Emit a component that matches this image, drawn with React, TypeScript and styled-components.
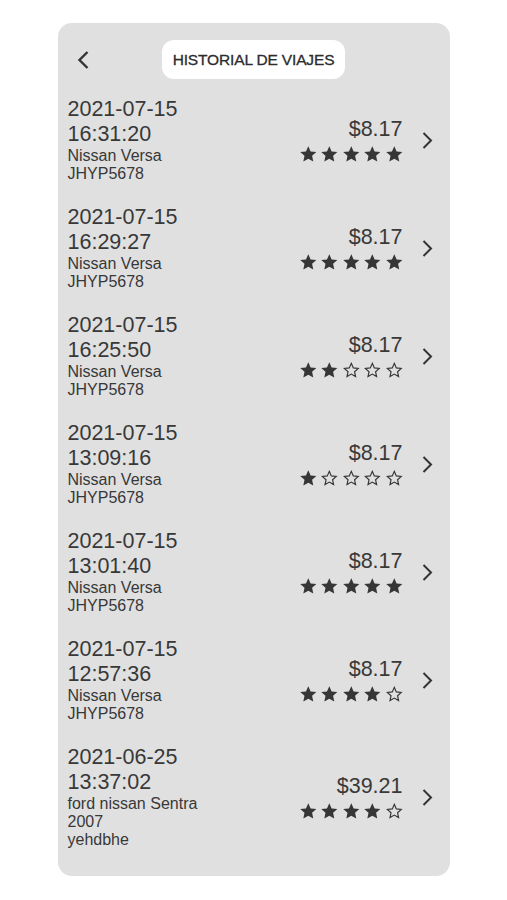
import React from "react";
import styled, { createGlobalStyle } from "styled-components";

const GlobalStyle = createGlobalStyle`
    body {
        margin: 0;
        background: #ffffff;
        font-family: "Liberation Sans", Arial, sans-serif;
        color: #383838;
    }
`;

const Page = styled.div`
    width: 507px;
    padding-top: 23px;
    display: flex;
    justify-content: center;
`;

const Card = styled.div`
    width: 392px;
    box-sizing: border-box;
    background: #e0e0e0;
    border-radius: 14px;
    padding: 17px 17px 27px 10px;
    display: flex;
    flex-direction: column;
`;

const HeaderRow = styled.div`
    position: relative;
    height: 39px;
    display: flex;
    align-items: center;
    justify-content: center;
    margin-bottom: 18px;
    margin-right: -7px;
`;

const BackButton = styled.div`
    position: absolute;
    left: 8px;
    top: 11px;
    width: 14px;
    height: 18px;
    display: flex;
`;

const TitlePill = styled.div`
    width: 183px;
    height: 39px;
    background: #ffffff;
    border-radius: 12px;
    display: flex;
    align-items: center;
    justify-content: center;
    font-size: 15.5px;
    letter-spacing: -0.15px;
    color: #2c2c2c;
    -webkit-text-stroke: 0.3px #2c2c2c;
`;

const TripList = styled.div`
    display: flex;
    flex-direction: column;
    gap: 22px;
`;

const TripRow = styled.div`
    display: flex;
    align-items: center;
`;

const TripInfo = styled.div`
    width: 150px;
    display: flex;
    flex-direction: column;
`;

const BigLine = styled.div`
    font-size: 21.5px;
    line-height: 25px;
`;

const SmallLine = styled.div`
    font-size: 16px;
    line-height: 18px;
`;

const TripSummary = styled.div`
    margin-left: auto;
    display: flex;
    flex-direction: column;
    align-items: flex-end;
`;

const Price = styled.div`
    font-size: 21.5px;
    line-height: 25px;
`;

const Stars = styled.div`
    display: flex;
    gap: 5px;
    margin-top: 4px;
    margin-bottom: 1px;
`;

const Chevron = styled.div`
    margin-left: 19px;
    width: 11px;
    height: 17px;
    display: flex;
`;

const STAR =
    "M0,-10 L2.763,-3.802 L9.511,-3.09 L4.47,1.452 L5.878,8.09 L0,4.7 L-5.878,8.09 L-4.47,1.452 L-9.511,-3.09 L-2.763,-3.802 Z";

const Star = ({ filled }: { filled: boolean }) => (
    <svg width="16.6" height="15.6" viewBox="-9.7 -10.2 19.4 18.4" style={{ overflow: "visible" }}>
        {filled ? (
            <path d={STAR} fill="#363636" />
        ) : (
            <path
                d={STAR}
                fill="none"
                stroke="#363636"
                strokeWidth="1.6"
                transform="scale(0.86)"
            />
        )}
    </svg>
);

type Trip = {
    date: string;
    time: string;
    lines: string[];
    price: string;
    rating: number;
};

const trips: Trip[] = [
    { date: "2021-07-15", time: "16:31:20", lines: ["Nissan Versa", "JHYP5678"], price: "$8.17", rating: 5 },
    { date: "2021-07-15", time: "16:29:27", lines: ["Nissan Versa", "JHYP5678"], price: "$8.17", rating: 5 },
    { date: "2021-07-15", time: "16:25:50", lines: ["Nissan Versa", "JHYP5678"], price: "$8.17", rating: 2 },
    { date: "2021-07-15", time: "13:09:16", lines: ["Nissan Versa", "JHYP5678"], price: "$8.17", rating: 1 },
    { date: "2021-07-15", time: "13:01:40", lines: ["Nissan Versa", "JHYP5678"], price: "$8.17", rating: 5 },
    { date: "2021-07-15", time: "12:57:36", lines: ["Nissan Versa", "JHYP5678"], price: "$8.17", rating: 4 },
    { date: "2021-06-25", time: "13:37:02", lines: ["ford nissan Sentra 2007", "yehdbhe"], price: "$39.21", rating: 4 },
];

const App = () => {
    return (
        <>
            <GlobalStyle />
            <Page>
                <Card>
                    <HeaderRow>
                        <BackButton>
                            <svg width="14" height="18" viewBox="0 0 14 18">
                                <path d="M11.5 1 L3.5 9 L11.5 17" fill="none" stroke="#333" strokeWidth="2.4" />
                            </svg>
                        </BackButton>
                        <TitlePill>HISTORIAL DE VIAJES</TitlePill>
                    </HeaderRow>
                    <TripList>
                        {trips.map((trip, i) => (
                            <TripRow key={i}>
                                <TripInfo>
                                    <BigLine>{trip.date}</BigLine>
                                    <BigLine>{trip.time}</BigLine>
                                    {trip.lines.map((line, j) => (
                                        <SmallLine key={j}>{line}</SmallLine>
                                    ))}
                                </TripInfo>
                                <TripSummary>
                                    <Price>{trip.price}</Price>
                                    <Stars>
                                        {[0, 1, 2, 3, 4].map((s) => (
                                            <Star key={s} filled={s < trip.rating} />
                                        ))}
                                    </Stars>
                                </TripSummary>
                                <Chevron>
                                    <svg width="11" height="17" viewBox="0 0 11 17">
                                        <path d="M1.5 1 L9 8.5 L1.5 16" fill="none" stroke="#333" strokeWidth="2" />
                                    </svg>
                                </Chevron>
                            </TripRow>
                        ))}
                    </TripList>
                </Card>
            </Page>
        </>
    );
};

export default App;
